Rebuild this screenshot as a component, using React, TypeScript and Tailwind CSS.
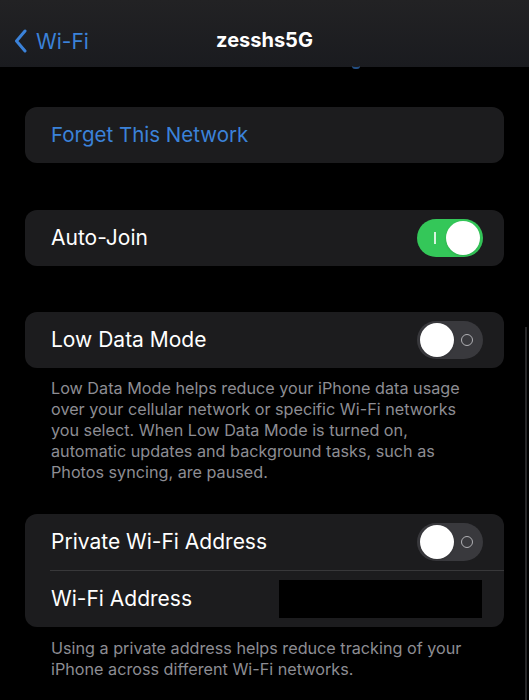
import React from 'react';

const Toggle = ({ on }: { on: boolean }) => (
  <div
    className={`relative w-[66px] h-[38px] rounded-full flex items-center ${
      on ? 'bg-[#34c759] justify-end' : 'bg-[#39393d] justify-start'
    } px-[3px]`}
  >
    {on ? (
      <span className="absolute left-[17px] top-[13px] w-[1.5px] h-[12px] bg-white/80" />
    ) : (
      <span className="absolute right-[10px] top-[13px] w-[12px] h-[12px] rounded-full border-[1.5px] border-[#b0b0b4]" />
    )}
    <div className="w-[34px] h-[34px] rounded-full bg-white shadow" />
  </div>
);

const Row = ({ label, children }: { label: string; children?: React.ReactNode }) => (
  <div className="h-[56px] flex items-center justify-between pl-[26px] pr-[21px]">
    <span className="text-[21px] text-white">{label}</span>
    {children}
  </div>
);

export default function App() {
  return (
    <div
      className="w-[529px] h-[700px] bg-black overflow-hidden relative"
      style={{ fontFamily: 'Inter, "Liberation Sans", sans-serif' }}
    >
      {/* nav bar */}
      <div className="h-[67px] bg-gradient-to-b from-[#222224] to-[#1a1b1f] relative flex items-center justify-center pt-[12px]">
        <div className="absolute left-[14px] top-[29px] flex items-center gap-[8px] text-[#3b82d9]">
          <svg width="14" height="24" viewBox="0 0 14 24" fill="none">
            <path d="M11 2 L2.5 12 L11 22" stroke="#3b82d9" strokeWidth="3" strokeLinecap="round" strokeLinejoin="round" />
          </svg>
          <span className="text-[21px] leading-none">Wi-Fi</span>
        </div>
        <span className="text-[20px] font-bold text-white">zesshs5G</span>
      </div>
      <div className="absolute left-[352px] top-[66px] w-[8px] h-[3px] rounded-b-full border-b-2 border-[#3b82d9]/60" />

      <div className="px-[25px] pt-[40px] flex flex-col">
        <div className="bg-[#1c1c1e] rounded-[12px] h-[56px] flex items-center pl-[26px]">
          <span className="text-[20.5px] text-[#3b82d9]">Forget This Network</span>
        </div>

        <div className="bg-[#1c1c1e] rounded-[12px] mt-[47px]">
          <Row label="Auto-Join">
            <Toggle on />
          </Row>
        </div>

        <div className="bg-[#1c1c1e] rounded-[12px] mt-[46px]">
          <Row label="Low Data Mode">
            <Toggle on={false} />
          </Row>
        </div>
        <p className="pl-[26px] pr-[30px] pt-[10px] text-[16.2px] leading-[21px] text-[#8d8d93]">
          Low Data Mode helps reduce your iPhone data usage over your cellular network or specific Wi-Fi networks you select. When Low Data Mode is turned on, automatic updates and background tasks, such as Photos syncing, are paused.
        </p>

        <div className="bg-[#1c1c1e] rounded-[12px] mt-[31px]">
          <Row label="Private Wi-Fi Address">
            <Toggle on={false} />
          </Row>
          <div className="ml-[25px] h-px bg-[#38383a]" />
          <Row label="Wi-Fi Address">
            <div className="w-[203px] h-[38px] bg-black mr-px" />
          </Row>
        </div>
        <p className="pl-[26px] pr-[20px] pt-[11px] text-[16.2px] leading-[21px] text-[#8d8d93]">
          Using a private address helps reduce tracking of your iPhone across different Wi-Fi networks.
        </p>
      </div>
      <div className="absolute left-[525px] top-[327px] w-[2px] h-[373px] bg-[#262628]" />
    </div>
  );
}
